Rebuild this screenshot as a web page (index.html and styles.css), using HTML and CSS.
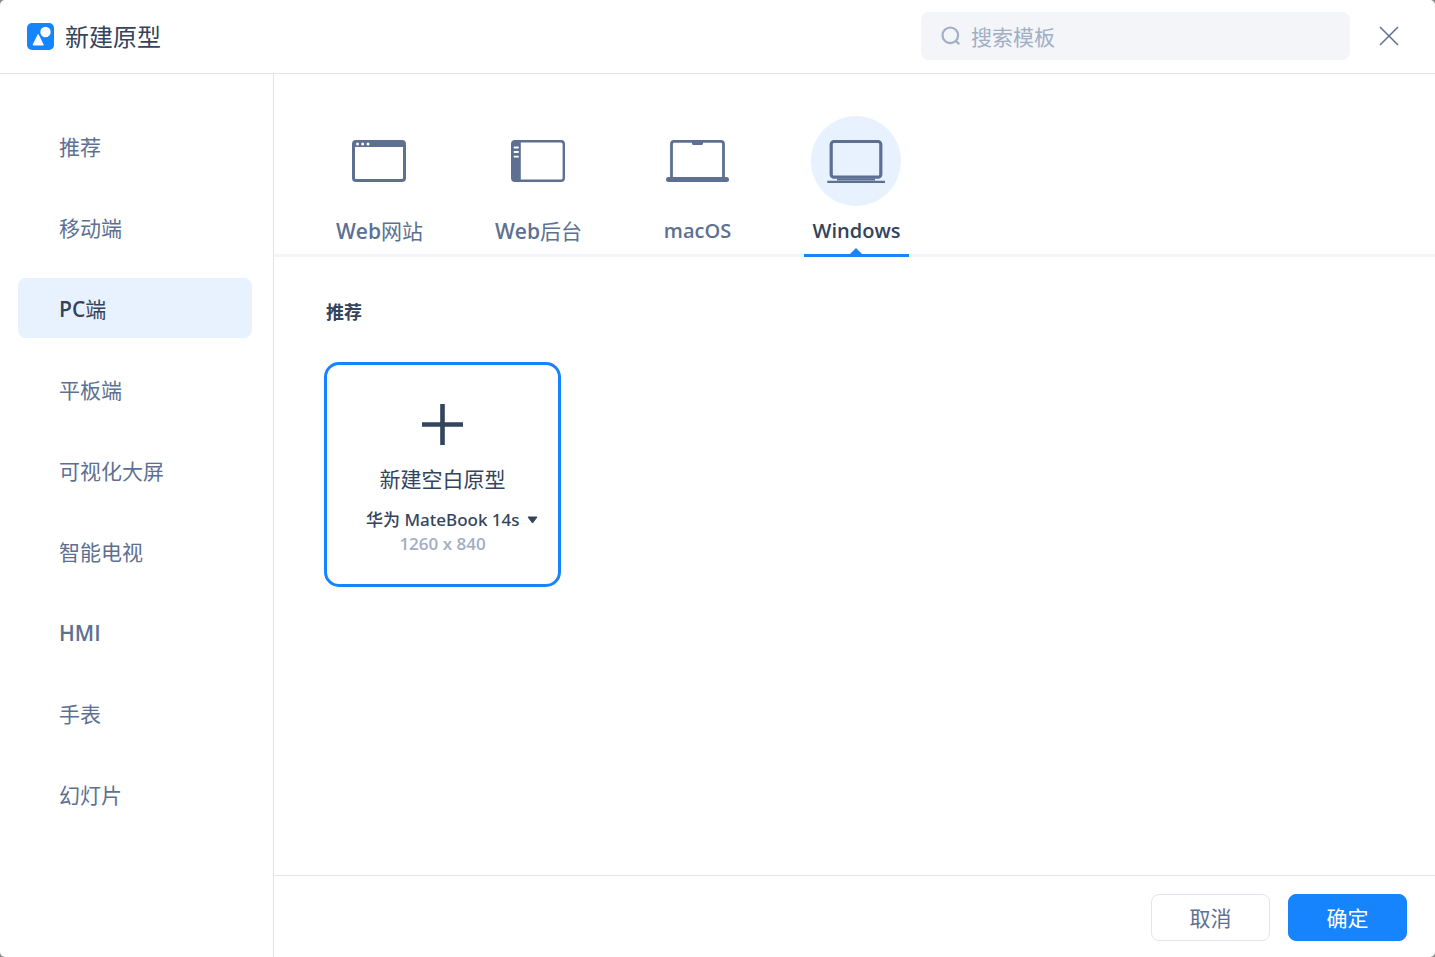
FILE: index.html
```
<!DOCTYPE html>
<html lang="zh-CN">
<head>
<meta charset="utf-8">
<title>新建原型</title>
<link rel="stylesheet" href="styles.css">
</head>
<body>
<div class="dialog">
  <header class="header">
    <svg class="logo" viewBox="0 0 27 27" aria-hidden="true">
      <rect width="27" height="27" rx="5" fill="#1684fc"/>
      <path d="M11.200 11.500 16.300 22H6z" fill="#fff" stroke="#fff" stroke-linejoin="round"/>
      <circle cx="18.5" cy="9" r="6" fill="#1684fc"/>
      <circle cx="18.5" cy="9" r="5.2" fill="#fff"/>
    </svg>
    <h1 class="title">新建原型</h1>
    <label class="search">
      <svg class="search-icon" viewBox="0 0 20 20" aria-hidden="true">
        <circle cx="9.3" cy="9.3" r="7.8"/>
        <path d="M14.6 14.6l3.6 3.6"/>
      </svg>
      <input class="search-input" type="text" placeholder="搜索模板" aria-label="搜索模板">
    </label>
    <button class="close" type="button" aria-label="关闭">
      <svg class="close-icon" viewBox="0 0 20 20" aria-hidden="true"><path d="M1 1l18 18M19 1L1 19"/></svg>
    </button>
  </header>
  <div class="body">
    <nav class="sidebar">
      <button class="nav-item" type="button">推荐</button>
      <button class="nav-item" type="button">移动端</button>
      <button class="nav-item active" type="button"><span class="latin">PC</span>端</button>
      <button class="nav-item" type="button">平板端</button>
      <button class="nav-item" type="button">可视化大屏</button>
      <button class="nav-item" type="button">智能电视</button>
      <button class="nav-item latin" type="button">HMI</button>
      <button class="nav-item" type="button">手表</button>
      <button class="nav-item" type="button">幻灯片</button>
    </nav>
    <main class="main">
      <div class="tabs">
        <button class="tab" type="button">
          <span class="tab-icon">
            <svg class="device" viewBox="0 0 64 44" aria-hidden="true">
              <rect x="6.5" y="2.5" width="51" height="39" rx="2.5" fill="none" stroke="#5d7092" stroke-width="3"/>
              <path d="M6 3h52v5H6z" fill="#5d7092"/>
              <g fill="#fff"><circle cx="10.5" cy="5" r="1.5"/><circle cx="15.7" cy="5" r="1.5"/><circle cx="21" cy="5" r="1.5"/></g>
            </svg>
          </span>
          <span class="tab-label"><span class="latin">Web</span>网站</span>
        </button>
        <button class="tab" type="button">
          <span class="tab-icon">
            <svg class="device" viewBox="0 0 64 44" aria-hidden="true">
              <rect x="6.2" y="2.2" width="51.6" height="39.6" rx="2.8" fill="none" stroke="#5d7092" stroke-width="2.4"/>
              <path d="M6 3h8.800v38H6z" fill="#5d7092"/>
              <path d="M8.500 8.500h3.500M8.500 13h3.500M8.500 17.700h3.500" stroke="#fff" stroke-width="1.800" stroke-linecap="round"/>
            </svg>
          </span>
          <span class="tab-label"><span class="latin">Web</span>后台</span>
        </button>
        <button class="tab" type="button">
          <span class="tab-icon">
            <svg class="device" viewBox="0 0 64 44" aria-hidden="true">
              <path d="M6.500 39V5q0-2.700 2.700-2.700h46.600q2.700 0 2.700 2.700v34" fill="none" stroke="#5d7092" stroke-width="2.800"/>
              <path d="M27 2h11v2.400q0 1.600-1.600 1.600h-7.800Q27 6 27 4.400z" fill="#5d7092"/>
              <rect x="1" y="38" width="63" height="5" rx="2.500" fill="#5d7092"/>
            </svg>
          </span>
          <span class="tab-label name latin">macOS</span>
        </button>
        <button class="tab active" type="button">
          <span class="tab-icon">
            <svg class="device" viewBox="0 0 64 44" aria-hidden="true">
              <rect x="7.200" y="2.500" width="49.600" height="35.700" rx="2.800" fill="none" stroke="#5d7092" stroke-width="3.200"/>
              <path d="M13 40.500h38" stroke="#5d7092" stroke-width="1.800"/>
              <path d="M3.300 42.800h57.700" stroke="#5d7092" stroke-width="2.200"/>
            </svg>
          </span>
          <span class="tab-label name latin">Windows</span>
        </button>
      </div>
      <section class="content">
        <h2 class="section-title">推荐</h2>
        <div class="card">
          <svg class="plus" viewBox="0 0 43 43" aria-hidden="true"><path d="M21.500 1v41M1 21.500h41"/></svg>
          <button class="card-title" type="button">新建空白原型</button>
          <div class="picker">
            <select class="device-select" aria-label="设备">
              <option>华为 MateBook 14s</option>
            </select>
            <svg class="caret" viewBox="0 0 11 8" aria-hidden="true"><path d="M1 1h9L5.500 7z"/></svg>
          </div>
          <span class="size latin">1260 x 840</span>
        </div>
      </section>
      <footer class="footer">
        <button class="btn" type="button">取消</button>
        <button class="btn primary" type="button">确定</button>
      </footer>
    </main>
  </div>
</div>
</body>
</html>
```
FILE: styles.css
```
* { box-sizing: border-box; }
body {
  margin: 0;
  background: #8a8a8a;
  color: #33445c;
  font: 400 21px/30px "Noto Sans", "Noto Sans CJK SC", sans-serif;
}
button, input, select {
  margin: 0;
  padding: 0;
  border: 0;
  background: none;
  color: inherit;
  font: inherit;
}
svg { display: block; flex: none; }
.latin { font-family: "Open Sans", "Noto Sans", sans-serif; font-weight: 600; }
.dialog {
  display: flex;
  flex-direction: column;
  min-height: 100vh;
  background: #fff;
  border-radius: 5px;
}
.header {
  display: flex;
  align-items: center;
  height: 74px;
  padding: 0 35px 1px 27px;
  border-bottom: 1px solid #e2e4ee;
}
.logo { width: 27px; height: 27px; }
.title { margin: 0 auto 0 11px; padding-top: 2px; font-size: 24px; font-weight: 400; }
.search {
  display: flex;
  align-items: center;
  gap: 10px;
  width: 429px;
  height: 48px;
  padding: 0 20px;
  border-radius: 8px;
  background: #f3f5f9;
}
.search-icon {
  width: 20px;
  height: 20px;
  fill: none;
  stroke: #a1aec3;
  stroke-width: 2.2;
}
.search-input { flex: 1; min-width: 0; padding-top: 2px; outline: 0; }
.search-input::placeholder { color: #a1aec3; opacity: 1; }
.close { margin-left: 28px; padding: 1px; }
.close-icon { width: 20px; height: 20px; stroke: #5d7092; stroke-width: 1.5; }
.body { display: flex; flex: 1; }
.sidebar {
  display: flex;
  flex-direction: column;
  gap: 21px;
  width: 274px;
  padding: 42px 21px 42px 18px;
  border-right: 1px solid #e2e4ee;
}
.nav-item {
  height: 60px;
  padding: 2px 0 0 41px;
  border-radius: 8px;
  color: #5d7092;
  text-align: left;
}
.nav-item.active { background: #e8f2ff; color: #33445c; }
.main { display: flex; flex: 1; flex-direction: column; min-width: 0; }
.tabs {
  display: flex;
  gap: 54px;
  padding: 42px 52px 0 53px;
  box-shadow: inset 0 -3px #f3f5f9;
}
.tab {
  position: relative;
  display: flex;
  flex-direction: column;
  align-items: center;
  gap: 10px;
  width: 105px;
  height: 141px;
  color: #5d7092;
}
.tab.active { color: #33445c; border-bottom: 3px solid #1684fc; }
.tab.active::after {
  content: "";
  position: absolute;
  bottom: 0;
  left: 46px;
  width: 12px;
  height: 6px;
  background: #1684fc;
  clip-path: polygon(50% 0, 100% 100%, 0 100%);
}
.tab-icon {
  display: grid;
  place-items: center;
  width: 90px;
  height: 90px;
  margin-right: 1px;
  border-radius: 50%;
}
.tab.active .tab-icon { background: #e8f2ff; }
.tab-label.name { font-size: 20px; }
.device { width: 64px; height: 44px; }
.content { flex: 1; padding: 40px 50px; }
.section-title { margin: 0 2px 35px; font-size: 18px; font-weight: 700; }
.card {
  display: flex;
  flex-direction: column;
  align-items: center;
  width: 237px;
  height: 225px;
  padding-top: 38px;
  border: 3px solid #1684fc;
  border-radius: 15px;
}
.plus {
  width: 43px;
  height: 43px;
  stroke: #33445c;
  stroke-width: 4.6;
  stroke-linecap: butt;
}
.card-title { margin: 18px 0 14px; }
.picker {
  position: relative;
  align-self: flex-end;
  margin-right: 20px;
  font-size: 17px;
  line-height: 24px;
}
.device-select {
  display: block;
  height: 24px;
  padding-right: 18px;
  appearance: none;
  font-weight: 500;
}
.caret {
  position: absolute;
  top: 8px;
  right: 0;
  width: 11px;
  height: 8px;
  fill: #33445c;
  stroke: #33445c;
  stroke-linejoin: round;
  pointer-events: none;
}
.size { color: #a1aec3; font-size: 17px; line-height: 24px; }
.footer {
  display: flex;
  justify-content: flex-end;
  gap: 18px;
  padding: 18px 28px 16px;
  border-top: 1px solid #e2e4ee;
}
.btn {
  width: 119px;
  height: 47px;
  border: 1px solid #e0e5f0;
  border-radius: 8px;
  color: #5d7092;
}
.btn.primary { border-color: #1684fc; background: #1684fc; color: #fff; }
```
